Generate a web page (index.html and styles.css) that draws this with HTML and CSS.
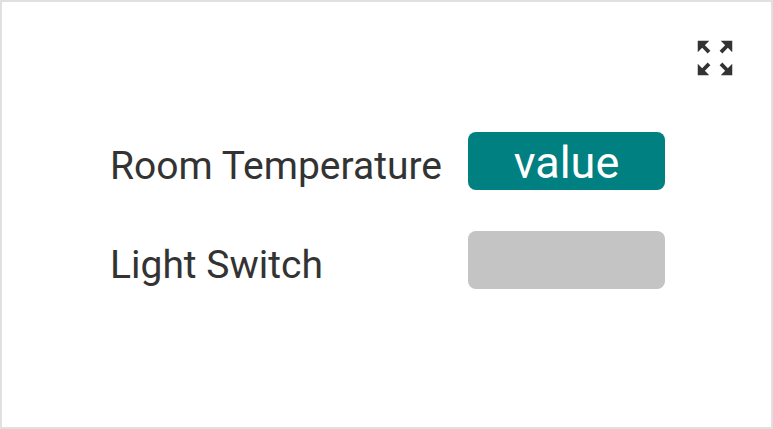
FILE: index.html
```html
<!DOCTYPE html>
<html>
<head>
<meta charset="utf-8">
<link rel="stylesheet" href="styles.css">
</head>
<body>
<div class="card">
  <div class="toolbar">
    <svg class="expand" viewBox="0 0 24 24" width="46" height="46"><path fill="#333" d="M15 3l2.3 2.3-2.89 2.87 1.42 1.42L18.7 6.7 21 9V3zM3 9l2.3-2.3 2.87 2.89 1.42-1.42L6.7 5.3 9 3H3zm6 12l-2.3-2.3 2.89-2.87-1.42-1.42L5.3 17.3 3 15v6zm12-6l-2.3 2.3-2.87-2.89-1.42 1.42 2.89 2.87L15 21h6z"/></svg>
  </div>
  <div class="rows">
    <div class="label">Room Temperature</div>
    <div class="box value">value</div>
    <div class="label">Light Switch</div>
    <div class="box empty"></div>
  </div>
</div>
</body>
</html>
```

FILE: styles.css
```css
html, body {
  margin: 0;
  padding: 0;
  background: #fff;
}
.card {
  box-sizing: border-box;
  width: 773px;
  height: 429px;
  border: 2px solid #e0e0e0;
  font-family: Roboto, "Noto Sans", sans-serif;
  color: #333;
}
.toolbar {
  display: flex;
  justify-content: flex-end;
  padding: 33px 33px 0 0;
  height: 46px;
}
.expand {
  display: block;
}
.rows {
  display: grid;
  grid-template-columns: 358px 197px;
  row-gap: 41px;
  padding: 51px 0 0 108px;
  align-items: center;
}
.label {
  font-size: 39px;
  line-height: 46px;
  margin-top: 9px;
}
.box {
  box-sizing: border-box;
  height: 58px;
  border-radius: 8px;
}
.value {
  background: #008080;
  color: #fff;
  font-size: 45px;
  line-height: 54px;
  padding-top: 4px;
  text-align: center;
}
.empty {
  background: #c4c4c4;
}
```
